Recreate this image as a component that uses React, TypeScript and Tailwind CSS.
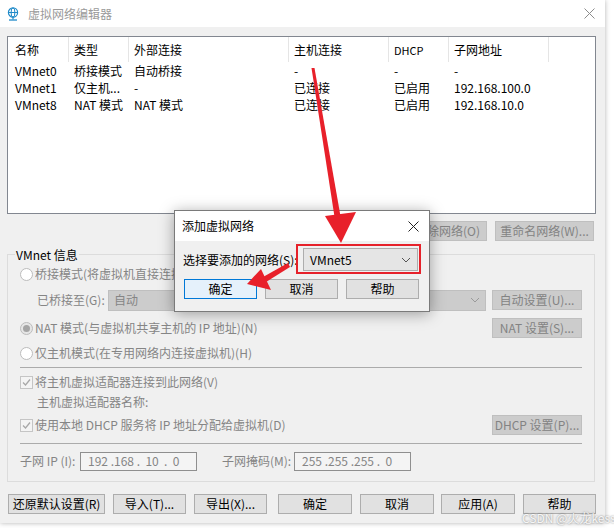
import type { ReactNode } from 'react'

const DISABLED_BTN =
  'h-[20px] flex items-center justify-center border border-[#bfbfbf] bg-[#cccccc] text-[#838383] text-[12px] whitespace-nowrap'
const BTN =
  'h-[20px] flex items-center justify-center border border-[#adadad] bg-[#e1e1e1] text-black text-[12px] whitespace-nowrap'

const COLS = [61, 60, 160, 100, 60, 100]

const rows = [
  ['VMnet0', '桥接模式', '自动桥接', '-', '-', '-'],
  ['VMnet1', '仅主机...', '-', '已连接', '已启用', '192.168.100.0'],
  ['VMnet8', 'NAT 模式', 'NAT 模式', '已连接', '已启用', '192.168.10.0'],
]

function Radio({ checked }: { checked?: boolean }) {
  return (
    <span
      className={
        'w-[13px] h-[13px] rounded-full border border-[#bcbcbc] flex items-center justify-center shrink-0 ' +
        (checked ? 'bg-[#e6e6e6]' : 'bg-white')
      }
    >
      {checked && <span className="w-[7px] h-[7px] rounded-full bg-[#a5a5a5]" />}
    </span>
  )
}

function Check() {
  return (
    <span className="w-[13px] h-[13px] border border-[#c5c5c5] bg-[#f4f4f4] flex items-center justify-center shrink-0">
      <svg width="11" height="11" viewBox="0 0 11 11">
        <path d="M2 5.5 L4.5 8 L9 2.5" fill="none" stroke="#a8a8a8" strokeWidth="1.3" />
      </svg>
    </span>
  )
}

function GrayText({ children, className = '' }: { children: ReactNode; className?: string }) {
  return <span className={'text-[12px] leading-[16px] text-[#858585] whitespace-nowrap ' + className}>{children}</span>
}

function Chevron({ color = '#8a8a8a' }: { color?: string }) {
  return (
    <svg width="10" height="6" viewBox="0 0 10 6">
      <path d="M1 1 L5 5 L9 1" fill="none" stroke={color} strokeWidth="1" />
    </svg>
  )
}

export default function App() {
  return (
    <div className="relative w-[614px] h-[528px] bg-white overflow-hidden font-[family-name:'Noto_Sans_CJK_SC',sans-serif] leading-[16px]">
      {/* 主窗口 */}
      <div className="w-[605px] h-[523px] bg-[#f0f0f0] shadow-[0_0_5px_rgba(0,0,0,0.3)] flex flex-col">
        {/* 标题栏 */}
        <div className="h-[27px] bg-white flex items-center pl-[7px] pr-[10px]">
          <svg width="12" height="14" viewBox="0 0 12 14">
            <circle cx="6" cy="5.5" r="4.6" fill="none" stroke="#1f8ac9" strokeWidth="1.2" />
            <ellipse cx="6" cy="5.5" rx="1.9" ry="4.6" fill="none" stroke="#1f8ac9" strokeWidth="1" />
            <line x1="1.4" y1="5.5" x2="10.6" y2="5.5" stroke="#1f8ac9" strokeWidth="1" />
            <line x1="6" y1="10" x2="6" y2="12.5" stroke="#1f8ac9" strokeWidth="1.2" />
            <line x1="2" y1="13" x2="10" y2="13" stroke="#1f8ac9" strokeWidth="1.3" />
          </svg>
          <span className="ml-[9px] text-[12px] text-[#9a9a9a]">虚拟网络编辑器</span>
          <svg className="ml-auto" width="11" height="11" viewBox="0 0 11 11">
            <path d="M0.5 0.5 L10.5 10.5 M10.5 0.5 L0.5 10.5" stroke="#8c8c8c" strokeWidth="1" />
          </svg>
        </div>

        <div className="flex flex-col pl-[7px] pr-[9px]">
          {/* 网络列表 */}
          <div className="mt-[9px] h-[178px] border border-[#828790] bg-white text-[12px] text-black">
            <div className="h-[25px] flex">
              {['名称', '类型', '外部连接', '主机连接', 'DHCP', '子网地址'].map((h, i) => (
                <div
                  key={h}
                  style={{ width: COLS[i] }}
                  className={
                    'h-full flex items-center border-r border-[#e5e5e5] ' +
                    (i === 0 ? 'pl-[7px]' : 'pl-[5px]') +
                    (h === 'DHCP' ? ' text-[11px]' : '')
                  }
                >
                  {h}
                </div>
              ))}
            </div>
            {rows.map((r) => (
              <div key={r[0]} className="h-[17px] flex items-center">
                {r.map((c, i) => (
                  <div
                    key={i}
                    style={{ width: COLS[i] }}
                    className={(i === 0 ? 'pl-[7px]' : 'pl-[5px]') + ' whitespace-nowrap shrink-0'}
                  >
                    {c}
                  </div>
                ))}
              </div>
            ))}
          </div>

          {/* 列表按钮 */}
          <div className="mt-[7px] flex justify-end gap-[8px] pr-[2px]">
            <div className={DISABLED_BTN + ' w-[88px]'}>添加网络(E)...</div>
            <div className={DISABLED_BTN + ' w-[80px] justify-end pr-[6px]'}>移除网络(O)</div>
            <div className={DISABLED_BTN + ' w-[99px]'}>重命名网络(W)...</div>
          </div>

          {/* VMnet 信息 */}
          <div className="relative mt-[13px] mr-[1px] border border-[#dcdcdc] pl-[12px] pr-[12px] pt-[11px] pb-[10px] flex flex-col">
            <span className="absolute left-[7px] top-[-8px] px-[1px] bg-[#f0f0f0] text-[12px] text-black">
              VMnet 信息
            </span>

            <div className="h-[16px] flex items-center gap-[2px]">
              <Radio />
              <GrayText>桥接模式(将虚拟机直接连接到外部网络)(B):</GrayText>
            </div>

            <div className="mt-[8px] h-[20px] flex items-center pl-[17px]">
              <GrayText className="w-[71px]">已桥接至(G):</GrayText>
              <div className="w-[378px] h-[21px] border border-[#bfbfbf] bg-[#cccccc] flex items-center pl-[5px] pr-[5px]">
                <GrayText>自动</GrayText>
                <span className="ml-auto">
                  <Chevron color="#9a9a9a" />
                </span>
              </div>
              <div className={DISABLED_BTN + ' w-[90px] ml-auto'}>自动设置(U)...</div>
            </div>

            <div className="mt-[8px] h-[20px] flex items-center gap-[2px]">
              <Radio checked />
              <GrayText>NAT 模式(与虚拟机共享主机的 IP 地址)(N)</GrayText>
              <div className={DISABLED_BTN + ' w-[90px] ml-auto'}>NAT 设置(S)...</div>
            </div>

            <div className="mt-[7px] h-[16px] flex items-center gap-[2px]">
              <Radio />
              <GrayText>仅主机模式(在专用网络内连接虚拟机)(H)</GrayText>
            </div>

            <div className="mt-[6px] border-t border-[#ababab]" />

            <div className="mt-[6px] h-[16px] flex items-center gap-[2px]">
              <Check />
              <GrayText>将主机虚拟适配器连接到此网络(V)</GrayText>
            </div>

            <div className="mt-[4px] h-[16px] flex items-center pl-[17px]">
              <GrayText>主机虚拟适配器名称:</GrayText>
            </div>

            <div className="mt-[5px] h-[20px] flex items-center gap-[2px]">
              <Check />
              <GrayText>使用本地 DHCP 服务将 IP 地址分配给虚拟机(D)</GrayText>
              <div className={DISABLED_BTN + ' w-[90px] ml-auto'}>DHCP 设置(P)...</div>
            </div>

            <div className="mt-[8px] border-t border-[#ababab]" />

            <div className="mt-[7px] h-[20px] flex items-center">
              <GrayText className="w-[60px]">子网 IP (I):</GrayText>
              <div className="w-[117px] h-[19px] border border-[#8f8f8f] bg-[#f4f4f4] flex items-center pl-[7px]">
                <GrayText className="whitespace-pre">192 .168 .  10  .  0</GrayText>
              </div>
              <GrayText className="ml-[25px] w-[72px]">子网掩码(M):</GrayText>
              <div className="w-[117px] h-[19px] border border-[#8f8f8f] bg-[#f4f4f4] flex items-center pl-[7px]">
                <GrayText className="whitespace-pre">255 .255 .255 .  0</GrayText>
              </div>
            </div>
          </div>

          {/* 底部按钮 */}
          <div className="mt-[12px] flex pl-[1px]">
            <div className={BTN + ' w-[97px]'}>还原默认设置(R)</div>
            <div className={BTN + ' w-[73px] ml-[8px]'}>导入(T)...</div>
            <div className={BTN + ' w-[73px] ml-[8px]'}>导出(X)...</div>
            <div className={BTN + ' w-[74px] ml-[11px]'}>确定</div>
            <div className={BTN + ' w-[74px] ml-[8px]'}>取消</div>
            <div className={BTN + ' w-[74px] ml-[7px]'}>应用(A)</div>
            <div className={BTN + ' w-[73px] ml-[8px]'}>帮助</div>
          </div>
        </div>
      </div>

      {/* 添加虚拟网络 对话框 */}
      <div className="absolute left-[174px] top-[210px] w-[256px] h-[102px] border border-[#7a7a7a] bg-[#f0f0f0] shadow-[0_2px_14px_rgba(0,0,0,0.35)] flex flex-col">
        <div className="h-[30px] bg-white flex items-center pl-[7px] pr-[10px]">
          <span className="text-[12px] text-black">添加虚拟网络</span>
          <svg className="ml-auto" width="11" height="11" viewBox="0 0 11 11">
            <path d="M0.5 0.5 L10.5 10.5 M10.5 0.5 L0.5 10.5" stroke="#222" strokeWidth="1" />
          </svg>
        </div>
        <div className="relative mt-[7px] h-[23px] flex items-center pl-[8px]">
          <span className="text-[12px] text-black w-[120px] whitespace-nowrap">选择要添加的网络(S):</span>
          <div className="w-[115px] h-[23px] border border-[#adadad] bg-[#e5e5e5] flex items-center pl-[6px] pr-[6px]">
            <span className="text-[12px] text-black">VMnet5</span>
            <span className="ml-auto">
              <Chevron color="#555" />
            </span>
          </div>
          <div className="absolute left-[121px] top-[-4px] w-[125px] h-[30px] border-2 border-[#e6212a]" />
        </div>
        <div className="mt-[8px] flex pl-[9px]">
          <div className="w-[73px] h-[20px] border border-[#0078d7] bg-[#e5f1fb] flex items-center justify-center text-[12px] text-black">
            确定
          </div>
          <div className={BTN + ' w-[73px] ml-[8px]'}>取消</div>
          <div className={BTN + ' w-[73px] ml-[8px]'}>帮助</div>
        </div>
      </div>

      {/* 红色箭头 */}
      <svg className="absolute left-0 top-0 pointer-events-none" width="614" height="528" viewBox="0 0 614 528">
        <polygon points="311.5,68 314.5,68 341,219 335,220" fill="#e8202a" />
        <polygon points="325,216 356,212 341,243" fill="#e8202a" />
        <polygon points="288,263 290,267 266,282 263,277" fill="#e8202a" />
        <polygon points="247,284 261,269 271,290" fill="#e8202a" />
      </svg>

      {/* 水印 */}
      <span className="absolute left-[522px] top-[510px] text-[12px] text-white/90 [text-shadow:0_0_2px_rgba(0,0,0,0.55)] whitespace-nowrap">
        CSDN @火龙kess
      </span>
    </div>
  )
}
